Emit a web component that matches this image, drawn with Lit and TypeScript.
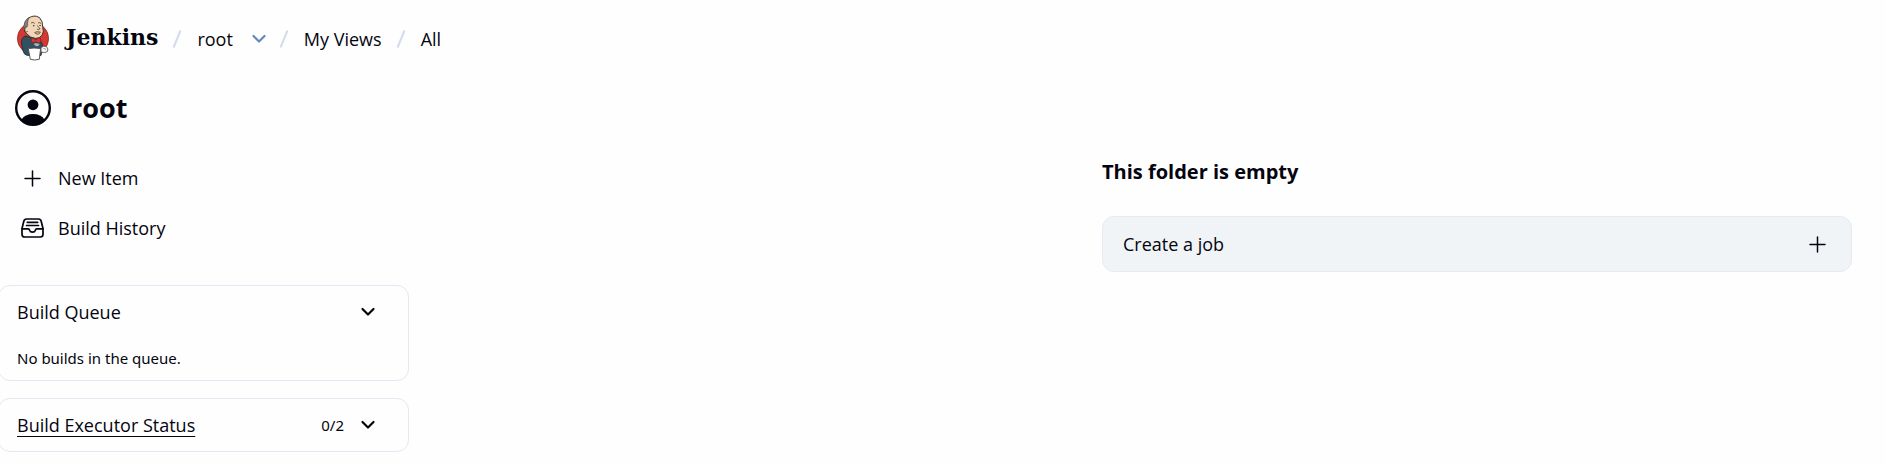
import { LitElement, html, css, svg } from "lit";
import { customElement } from "lit/decorators.js";

const chevron = html`<svg class="chevron" viewBox="0 0 16 16" aria-hidden="true">
  <path d="M2.500 5l5.500 5.500 5.500-5.500" fill="none" stroke="currentColor" stroke-width="2.200" stroke-linecap="round" stroke-linejoin="round" />
</svg>`;

const plus = html`<svg class="icon" viewBox="0 0 24 24" aria-hidden="true">
  <path d="M12.500 5v15M5 12.500h15" fill="none" stroke="currentColor" stroke-width="1.500" stroke-linecap="round" />
</svg>`;

const tray = html`<svg class="icon" viewBox="0 0 24 24" aria-hidden="true">
  <g fill="none" stroke="currentColor" stroke-width="1.700" stroke-linecap="round" stroke-linejoin="round">
    <path d="M2 12.500L3.800 5.200Q4.400 3 6.500 3H18.500Q20.600 3 21.200 5.200L23 12.500V18.300Q23 21 20.300 21H4.700Q2 21 2 18.300Z" />
    <path d="M2.200 12.800H8.300Q9.300 12.800 9.600 14.200Q10.200 16.200 12.500 16.200T15.400 14.200Q15.700 12.800 16.700 12.800H22.800" />
    <path d="M7.300 6.300H17.700M6.500 9.500H18.500" />
  </g>
</svg>`;

const person = html`<svg class="avatar" viewBox="0 0 36 36" aria-hidden="true">
  <circle cx="18" cy="18" r="16.800" fill="none" stroke="currentColor" stroke-width="2.400" />
  <circle cx="18" cy="14.800" r="5.400" fill="currentColor" />
  <path d="M6.500 29.500Q10 24 18 24T29.500 29.500Q25 35 18 35T6.500 29.500Z" fill="currentColor" />
</svg>`;

const butler = svg`
  <ellipse cx="17" cy="23.500" rx="15.600" ry="15.600" fill="#d33833" stroke="#8b2a26" stroke-width=".8" />
  <path d="M9 21Q5 23 5.500 28Q6 35 8.500 39Q11 41 14 40.500H25Q27 36 26.500 30Q25.500 25 21 24Z" fill="#335061" stroke="#1d2a33" stroke-width=".8" />
  <path d="M8.800 17Q7.500 7.500 12.500 3.200Q18 -.8 23.500 2.600Q27 6 26.800 12.500Q28 17 26.200 20Q23.800 23.600 19.500 23.400Q14 23 10.800 18.800Z" fill="#f0d6b7" stroke="#2b2523" stroke-width=".9" />
  <path d="M8.800 16Q6.800 11 9 6.500Q10.500 3.600 13.300 2.300Q11.800 5 11.600 8Q12.200 10.500 11 12Q9.800 13.500 8.800 16Z" fill="#7f7c79" stroke="#4a4542" stroke-width=".6" />
  <path d="M10.500 12Q8.500 12 8.800 15T11.800 16.500" fill="#f0d6b7" stroke="#2b2523" stroke-width=".7" />
  <path d="M15 8Q17.500 6.500 18.800 8.500M22 8Q23.500 7 25 8.500M21.500 10.500Q22.800 13 24.200 13.800Q22.500 15 21 14.200" fill="none" stroke="#3b2d27" stroke-width=".7" />
  <path d="M17 10.800h1.400M23.500 10.500h1.200" stroke="#231f20" stroke-width="1.100" />
  <path d="M18.500 17.500Q21 16 24.500 17Q23.500 19.500 21.500 19.300Q19.500 19 18.500 17.500Z" fill="#c9a78c" stroke="#4a3830" stroke-width=".6" />
  <path d="M15.500 23Q17.800 23 19.800 25Q22 22.500 24.500 23Q25.200 25.500 24.200 28Q21.500 28 19.800 26.500Q18 28.200 15.800 27.500Q14.800 25.500 15.500 23Z" fill="#d33833" stroke="#7a1d1b" stroke-width=".6" />
  <path d="M17 28.500Q20.500 27 24 28.800Q24.200 31 21 31.800Q18 31 17 28.500Z" fill="#9fb9c6" stroke="#26343d" stroke-width=".6" />
  <path d="M25 32.500Q27.500 30.500 30.500 31.500Q32.800 34 31.500 36.500Q28.500 38.500 25 37Z" fill="#f6f6f6" stroke="#4a4a4a" stroke-width=".8" />
  <path d="M27.500 33.500Q29.500 33 30 35" fill="none" stroke="#666" stroke-width=".6" />
  <path d="M12.300 33.500Q18 32.600 24.600 33.500L23.300 44.300Q18.500 45.700 14.300 44.300Z" fill="#fff" stroke="#4a4a4a" stroke-width=".9" />`;

@customElement("app-root")
export class AppRoot extends LitElement {
  static styles = css`
    :host {
      display: block;
      min-height: 100vh;
      background: #fefefe;
      color: #04040f;
      font: 18px/24px "Open Sans", "Noto Sans", sans-serif;
      --line: #e4e8f2;
    }
    * { box-sizing: border-box; }
    a { color: inherit; text-decoration: none; }
    h1, h2, p { margin: 0; }
    button {
      font: inherit;
      color: inherit;
      background: none;
      border: 0;
      padding: 0;
      display: flex;
      cursor: pointer;
    }
    svg { display: block; flex: none; }
    .icon { width: 24px; height: 24px; }
    .chevron { width: 16px; height: 16px; }
    .header { display: flex; align-items: center; height: 76px; padding-left: 16px; }
    .brand { display: flex; align-items: center; gap: 17px; }
    .logo { width: 33px; height: 46px; }
    .name { font: bold 22px/28px "DejaVu Serif", serif; padding-bottom: 2px; }
    .crumbs { display: flex; align-items: center; list-style: none; margin: 0; padding: 2px 0 0; }
    .crumb { display: flex; align-items: center; }
    .slash { width: 10px; height: 18px; margin: 0 15px 0 14px; color: #d3dcea; }
    .menu { margin-left: 18px; margin-right: -2px; color: #6389ba; }
    .body { display: flex; align-items: flex-start; }
    .side { width: 410px; flex: none; }
    .user { display: flex; align-items: center; gap: 19px; padding: 14px 15px 27px; }
    .avatar { width: 36px; height: 36px; }
    .title { font-size: 27px; line-height: 36px; font-weight: 700; }
    .task { display: flex; align-items: center; gap: 14px; height: 50px; padding-left: 20px; }
    .panes { display: grid; gap: 17px; margin: 32px 1px 12px -2px; }
    .pane { border: 1px solid var(--line); border-radius: 12px; padding: 13px 32px 13px 18px; }
    .head { display: flex; align-items: center; gap: 16px; min-height: 26px; }
    .label { flex: 1; font-size: 18px; line-height: 26px; font-weight: 400; }
    .status { text-decoration: underline; text-underline-offset: 4px; text-decoration-thickness: 1px; }
    .small { font-family: "Noto Sans", sans-serif; font-size: 15px; line-height: 24px; }
    .note { padding-top: 21px; margin-bottom: -3px; }
    .main { flex: 1; padding: 82px 34px 0; }
    .empty { max-width: 750px; margin-left: auto; }
    .heading { font-size: 20px; line-height: 28px; font-weight: 700; margin-bottom: 30px; }
    .job {
      display: flex;
      align-items: center;
      justify-content: space-between;
      height: 56px;
      padding: 0 22px 0 20px;
      border: 1px solid #e6ebf0;
      border-radius: 12px;
      background: #f0f4f7;
    }
  `;

  private slash() {
    return html`<svg class="slash" viewBox="0 0 10 18" aria-hidden="true">
      <path d="M8.500 .5L1.500 17.500" stroke="currentColor" stroke-width="2" />
    </svg>`;
  }

  render() {
    return html`
      <header class="header">
        <a class="brand" href="#">
          <svg class="logo" viewBox="0 0 33 46" aria-hidden="true">${butler}</svg>
          <span class="name">Jenkins</span>
        </a>
        <nav aria-label="Breadcrumbs">
          <ol class="crumbs">
            <li class="crumb">
              ${this.slash()}<a href="#">root</a>
              <button class="menu" aria-label="Menu for root">${chevron}</button>
            </li>
            <li class="crumb">${this.slash()}<a href="#">My Views</a></li>
            <li class="crumb">${this.slash()}<a href="#">All</a></li>
          </ol>
        </nav>
      </header>
      <div class="body">
        <aside class="side">
          <div class="user">${person}<h1 class="title">root</h1></div>
          <nav aria-label="Tasks">
            <a class="task" href="#">${plus}<span>New Item</span></a>
            <a class="task" href="#">${tray}<span>Build History</span></a>
          </nav>
          <div class="panes">
            <section class="pane">
              <div class="head">
                <h2 class="label">Build Queue</h2>
                <button aria-label="Collapse Build Queue">${chevron}</button>
              </div>
              <p class="note small">No builds in the queue.</p>
            </section>
            <section class="pane">
              <div class="head">
                <h2 class="label"><a class="status" href="#">Build Executor Status</a></h2>
                <span class="small">0/2</span>
                <button aria-label="Expand Build Executor Status">${chevron}</button>
              </div>
            </section>
          </div>
        </aside>
        <main class="main">
          <section class="empty">
            <h2 class="heading">This folder is empty</h2>
            <a class="job" href="#"><span>Create a job</span>${plus}</a>
          </section>
        </main>
      </div>
    `;
  }
}
